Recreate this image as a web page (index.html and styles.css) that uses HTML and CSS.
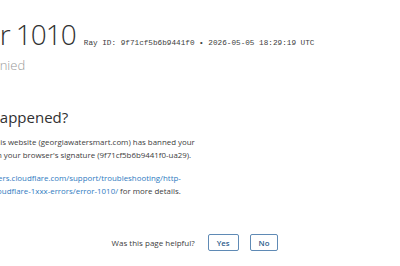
FILE: index.html
```html
<!DOCTYPE html>
<html lang="en">
<head>
<meta charset="utf-8">
<title>Access denied | Error 1010</title>
<link rel="stylesheet" href="styles.css">
</head>
<body>
<div class="page">
  <header class="head">
    <div class="title-row">
      <h1 class="title">Error 1010</h1>
      <span class="ray">Ray ID: 9f71cf5b6b9441f0 &bull; 2026-05-05 18:29:19 UTC</span>
    </div>
    <h2 class="sub">Access denied</h2>
  </header>
  <section class="what">
    <h2 class="what-title">What happened?</h2>
    <p class="text">The owner of this website (georgiawatersmart.com) has banned your access based on your browser's signature (9f71cf5b6b9441f0-ua29).</p>
    <p class="text"><a class="link" href="#">https://developers.cloudflare.com/support/troubleshooting/http-status-codes/cloudflare-1xxx-errors/error-1010/</a> for more details.</p>
  </section>
</div>
<footer class="feedback">
  <span class="feedback-q">Was this page helpful?</span>
  <button class="btn" type="button">Yes</button>
  <button class="btn" type="button">No</button>
</footer>
</body>
</html>
```
FILE: styles.css
```css
html, body {
  margin: 0;
  padding: 0;
  background: #ffffff;
}
body {
  width: 400px;
  height: 266px;
  overflow: hidden;
  font-family: "Open Sans", "Noto Sans", sans-serif;
  color: #404040;
}
.page {
  margin-left: -58px;
  width: 258px;
}
.title-row {
  display: flex;
  align-items: baseline;
  gap: 8px;
  padding-top: 19px;
  margin-left: 8px;
  white-space: nowrap;
}
.title {
  margin: 0;
  font-size: 28px;
  line-height: 30px;
  font-weight: 300;
  letter-spacing: -1px;
  color: #313131;
}
.ray {
  font-family: "Liberation Mono", monospace;
  font-size: 7.7px;
  color: #404040;
}
.sub {
  margin: 8px 0 0;
  font-size: 13px;
  line-height: 16px;
  font-weight: 300;
  color: #999999;
}
.what-title {
  margin: 34px 0 0 8px;
  font-size: 15px;
  line-height: 20px;
  font-weight: 400;
  color: #313131;
}
.text {
  margin: 9px 0 0;
  font-size: 7.9px;
  line-height: 13px;
  color: #404040;
}
.text + .text {
  margin-top: 10px;
}
.link {
  color: #2f7bbf;
  text-decoration: none;
}
.feedback {
  display: flex;
  justify-content: center;
  align-items: center;
  gap: 11px;
  margin-top: 36px;
  padding-right: 10px;
  font-size: 8px;
  color: #404040;
}
.feedback-q {
  margin-right: 2px;
}
.btn {
  font-family: "Open Sans", "Noto Sans", sans-serif;
  font-size: 7.8px;
  font-weight: 600;
  color: #2d5d8c;
  background: #ffffff;
  border: 1px solid #5f8ab5;
  border-radius: 2px;
  height: 17px;
  padding: 0 8px;
}
```
